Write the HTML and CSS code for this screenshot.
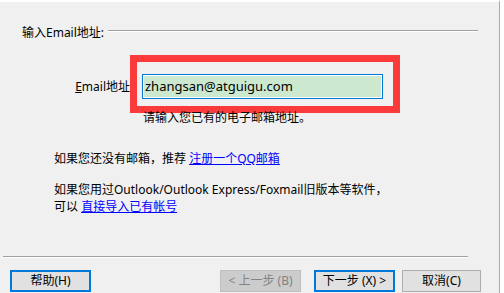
FILE: index.html
```html
<!DOCTYPE html>
<html lang="zh-CN">
<head>
<meta charset="utf-8">
<title>输入Email地址</title>
<link rel="stylesheet" href="styles.css">
</head>
<body>
<div class="dialog">
  <div class="group-head">
    <span class="group-title">输入Email地址:</span>
    <span class="group-rule"></span>
  </div>
  <div class="email-row">
    <label class="email-label"><u>E</u>mail地址</label>
    <div class="mark">
      <div class="input">zhangsan@atguigu.com</div>
    </div>
  </div>
  <div class="hint">请输入您已有的电子邮箱地址。</div>
  <p class="para first">如果您还没有邮箱，推荐 <a href="#">注册一个QQ邮箱</a></p>
  <p class="para second">如果您用过Outlook/Outlook Express/Foxmail旧版本等软件，<br>可以 <a href="#">直接导入已有帐号</a></p>
  <div class="footer">
    <div class="sep"></div>
    <div class="buttons">
      <button class="btn focus">帮助(H)</button>
      <button class="btn disabled prev">&lt; 上一步 (B)</button>
      <button class="btn focus next">下一步 (X) &gt;</button>
      <button class="btn cancel">取消(C)</button>
    </div>
  </div>
</div>
</body>
</html>
```
FILE: styles.css
```css
html, body {
  margin: 0;
  padding: 0;
  background: #ffffff;
}
body {
  width: 504px;
  height: 293px;
  overflow: hidden;
  font-family: "Noto Sans", "Noto Sans CJK SC", sans-serif;
  font-size: 12px;
  color: #000;
}
.dialog {
  box-sizing: border-box;
  width: 500px;
  height: 293px;
  background: #f0f0f0;
  border-top: 2px solid #ffffff;
  border-right: 1px solid #7db3e8;
  display: flex;
  flex-direction: column;
}
.group-head {
  display: flex;
  align-items: flex-start;
  margin-top: 23px;
  padding-left: 22px;
  padding-right: 21px;
  line-height: 16px;
}
.group-rule {
  flex: 1;
  margin-left: 4px;
  margin-top: 5px;
  height: 1px;
  border-top: 1px solid #a0a0a0;
  background: #ffffff;
}
.email-row {
  display: flex;
  align-items: flex-start;
  margin-top: 14px;
}
.email-label {
  width: 130px;
  text-align: right;
  line-height: 16px;
  margin-top: 24px;
}
.mark {
  box-sizing: border-box;
  width: 270px;
  height: 58px;
  border: 7px solid #fb3a3c;
  padding: 12px 0 0 5px;
}
.input {
  box-sizing: border-box;
  width: 241px;
  height: 25px;
  border: 1px solid #0078d7;
  box-shadow: inset 0 0 0 1px #ffffff;
  background: #cce8cf;
  padding-left: 2px;
  font-size: 13px;
  line-height: 23px;
}
.hint {
  margin-top: -3px;
  padding-left: 143px;
  line-height: 16px;
}
.para {
  margin: 0;
  padding-left: 54px;
  line-height: 17px;
}
.para.first {
  margin-top: 24px;
}
.para.second {
  margin-top: 14px;
}
.para a {
  color: #0000ff;
  text-decoration: underline;
}
.footer {
  margin-top: auto;
}
.sep {
  margin-left: 3px;
  width: 465px;
  height: 1px;
  border-top: 1px solid #a0a0a0;
  background: #ffffff;
}
.buttons {
  display: flex;
  margin-top: 12px;
  padding-left: 10px;
  margin-bottom: 1px;
}
.btn {
  box-sizing: border-box;
  width: 81px;
  height: 22px;
  padding: 0;
  font-family: "Noto Sans", "Noto Sans CJK SC", sans-serif;
  font-size: 12px;
  line-height: 18px;
  color: #000;
  background: #e1e1e1;
  border: 1px solid #adadad;
}
.btn.focus {
  border: 2px solid #0078d7;
}
.btn.disabled {
  background: #cccccc;
  border-color: #bfbfbf;
  color: #838383;
}
.btn.prev {
  margin-left: 129px;
}
.btn.next {
  margin-left: 13px;
}
.btn.cancel {
  width: 79px;
  margin-left: 7px;
}
```
